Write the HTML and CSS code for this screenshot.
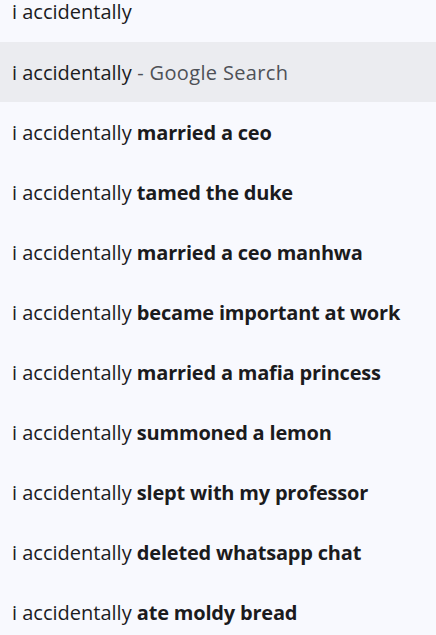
FILE: index.html
```html
<!DOCTYPE html>
<html>
<head>
<meta charset="utf-8">
<link rel="stylesheet" href="styles.css">
</head>
<body>
<ul class="list">
  <li class="row">i accidentally</li>
  <li class="row active">i accidentally<span class="suffix"> - Google Search</span></li>
  <li class="row">i accidentally <b>married a ceo</b></li>
  <li class="row">i accidentally <b>tamed the duke</b></li>
  <li class="row">i accidentally <b>married a ceo manhwa</b></li>
  <li class="row">i accidentally <b>became important at work</b></li>
  <li class="row">i accidentally <b>married a mafia princess</b></li>
  <li class="row">i accidentally <b>summoned a lemon</b></li>
  <li class="row">i accidentally <b>slept with my professor</b></li>
  <li class="row">i accidentally <b>deleted whatsapp chat</b></li>
  <li class="row">i accidentally <b>ate moldy bread</b></li>
</ul>
</body>
</html>
```
FILE: styles.css
```css
html, body {
  margin: 0;
  padding: 0;
  background: #f8f9fe;
  overflow: hidden;
}
.list {
  list-style: none;
  margin: -19px 0 0 0;
  padding: 0;
  font-family: "Open Sans", "Noto Sans", sans-serif;
  font-size: 20px;
  color: #1c1c1e;
}
.row {
  height: 60px;
  display: flex;
  align-items: center;
  padding-left: 12px;
  white-space: pre;
}
.row:first-child {
  height: 61px;
}
.row b {
  font-weight: 700;
  color: #1b1b1d;
  letter-spacing: -0.2px;
}
.active {
  background: #ebecf0;
}
.suffix {
  color: #4e5157;
  letter-spacing: 0.35px;
}
```
